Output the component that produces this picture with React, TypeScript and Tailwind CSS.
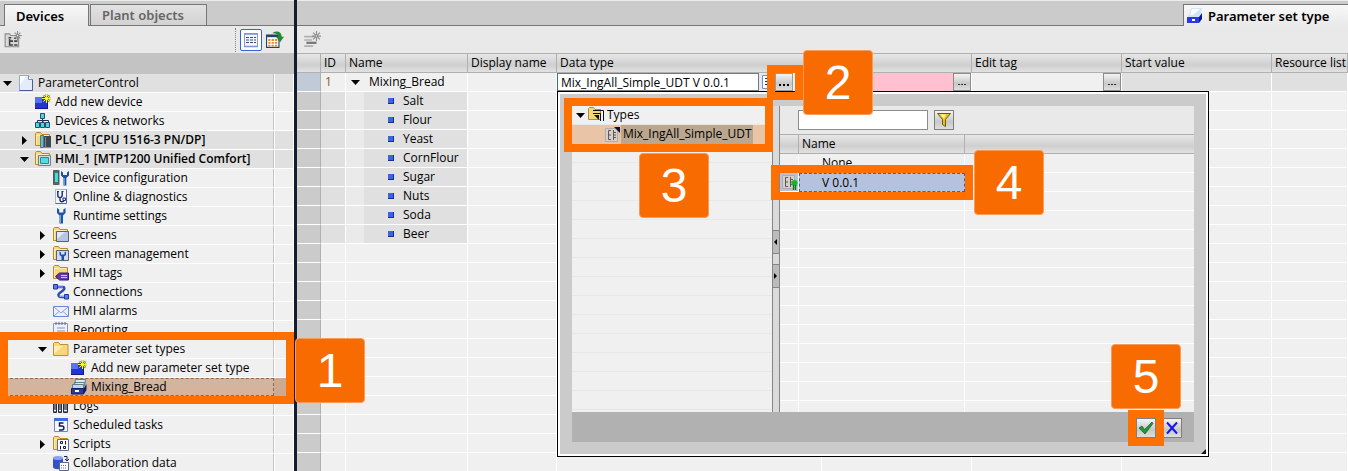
import type { ReactNode } from "react";

const FONT = "font-['Open_Sans','Noto_Sans',sans-serif]";

function Svg({ children, size = 16 }: { children: ReactNode; size?: number }) {
  return (
    <svg
      width={size}
      height={size}
      viewBox="0 0 16 16"
      fill="none"
      className="shrink-0"
      aria-hidden="true"
    >
      {children}
    </svg>
  );
}

const Star = () => (
  <>
    <path
      d="M11.5 0v9M7 4.5h9M8.3 1.3l6.4 6.4M14.7 1.3 8.3 7.7"
      stroke="#55552a"
      strokeWidth="1.6"
    />
    <path
      d="M11.5 0v9M7 4.5h9M8.3 1.3l6.4 6.4M14.7 1.3 8.3 7.7"
      stroke="#f6f23c"
      strokeWidth="1"
    />
  </>
);

const Folder = () => (
  <>
    <path d="M.5 13.5V1.5l1-1h4l1.500 2h7.500v11z" fill="#f8d67c" stroke="#b98a2a" />
    <path d="M1.500 3.500h12M1.500 3v10" stroke="#fdedb8" />
  </>
);

const icons = {
  project: (
    <Svg>
      <path d="M1.500.5h9l4 4v11h-13z" fill="#e4ecfb" stroke="#98a6d0" />
      <path d="M2 1h6L2 10z" fill="#fff" />
      <path d="M10.500.5v4h4" fill="#fff" stroke="#7d8cc0" />
      <path d="M14.500 4.500v11h-13" stroke="#4c5c9c" />
    </Svg>
  ),
  addNew: (
    <Svg>
      <path d="M0 3h13v12H0z" fill="#2334cf" />
      <path d="M0 3h7v6H0z" fill="#5672f2" />
      <path d="M0 14.500h13M12.500 8v7" stroke="#10188c" />
      <Star />
    </Svg>
  ),
  networks: (
    <Svg>
      <path d="M7.500 5v4M2.500 10V7.500h11V10M8 7v3" stroke="#222c50" />
      <path
        d="M5.500.5h4v5h-4zM.5 9.500h4v5h-4zM5.500 9.500h4v5h-4zM10.500 9.500h4v5h-4z"
        fill="#4cd4e0"
        stroke="#2b4a70"
      />
    </Svg>
  ),
  plc: (
    <Svg>
      <Folder />
      <path d="M5.500 3.500h3v12h-3z" fill="#4cc9cf" stroke="#667078" />
      <path d="M9 4h7v11.500H9z" fill="#3f4852" />
      <path d="M10.500 5v10" stroke="#7c868e" />
    </Svg>
  ),
  hmi: (
    <Svg>
      <Folder />
      <path d="M3.500 4.500h12v10h-12z" fill="#d5dce2" stroke="#74828e" />
      <path d="M5.500 6.500h8v6h-8z" fill="#4fdde2" stroke="#3f7e96" />
    </Svg>
  ),
  device: (
    <Svg>
      <path d="M.5.5h5v14h-5z" fill="#5a686e" stroke="#4e5a60" />
      <path d="M2 3h3v9H2z" fill="#3be0dc" />
      <path d="M6.500 0v15" stroke="#a4aeb2" />
      <path
        d="M8 1v4.500L10.500 8v7.500h2.800V8L16 5.500V1l-2 1.500V5h-4V2.500z"
        fill="#1c4f9e"
      />
      <path d="M11.500 8v7" stroke="#5f97d8" />
    </Svg>
  ),
  diagnostics: (
    <Svg>
      <path d="M2.500.5h11v14h-11z" fill="#f4f6fc" stroke="#a9b6da" />
      <path d="M13.500.5v14h-11" stroke="#5868a8" />
      <path
        d="M4.800 3v3c0 3.500 4.400 3.500 4.400 0V3M7 8.500V11c0 2.500 4 2 4 0"
        stroke="#1d2a78"
        strokeWidth="1.400"
      />
      <path d="M10 9h2.500v2.500H10zM4 2.500h2M8.500 2.500h2" stroke="#1d2a78" />
    </Svg>
  ),
  runtime: (
    <Svg>
      <path
        d="M4 0v5l2.500 2.500v8h3.500v-8L12.500 5V0l-2.200 1.500v3H6.200v-3z"
        fill="#1c55a4"
      />
      <path d="M7.500 7v8" stroke="#6ea6e0" />
    </Svg>
  ),
  screens: (
    <Svg>
      <Folder />
      <path d="M3.500 4.500h12v10h-12z" fill="#b8c4e0" stroke="#566180" />
      <path d="M4 5h8l-8 7z" fill="#e2e8f6" />
    </Svg>
  ),
  screenMgmt: (
    <Svg>
      <Folder />
      <path d="M3.500 4.500h12v10h-12z" fill="#cfdcf0" stroke="#566180" />
      <path
        d="M6.500 5.500V9l2 1.500v3.500h2.500v-3.500L13 9V5.500l-1.500 1v2H8v-2z"
        fill="#1f4fa8"
      />
    </Svg>
  ),
  tags: (
    <Svg>
      <Folder />
      <path
        d="M2.500 11.500 6.500 8h9v7h-9z"
        fill="#6436b0"
        stroke="#35187a"
      />
      <path d="M8 10.500h6M8 12.500h6" stroke="#d8c8f4" />
    </Svg>
  ),
  connections: (
    <Svg>
      <path
        d="M3 3h7c2 0 1.500 2 .5 3L6 9.500c-1.500 2 0 3.500 1.500 3.500H13"
        stroke="#2c48b4"
        strokeWidth="2.400"
      />
      <path d="M4 3h6M6.500 12.500H11" stroke="#8fa8f4" />
      <path
        d="M.5.5h4v4.500h-4zM11.500 10.500h4v4.500h-4z"
        fill="#5a7cec"
        stroke="#2038a0"
      />
    </Svg>
  ),
  alarms: (
    <Svg>
      <path d="M.5 3.500h15v10H.5z" fill="#eaf0ff" stroke="#6f86dc" />
      <path d="m1 4 7 6 7-6M1 13l5-4.500M15 13l-5-4.500" stroke="#8ea2e6" />
    </Svg>
  ),
  reporting: (
    <Svg>
      <path d="M.5 1.500h14v14H.5z" fill="#eef0fa" stroke="#8c96c4" />
      <path d="M3 0v3M6 0v3M9 0v3M12 0v3" stroke="#5c6aa0" />
      <path d="M4 6h8M4 9h8M4 12h6" stroke="#8c96b4" />
    </Svg>
  ),
  folder: (
    <Svg>
      <path
        d="M.5 14.500V2.500l1-1h4l1.500 2h8v11z"
        fill="#f8d67c"
        stroke="#c0902e"
      />
      <path d="M1 5h9l-9 8z" fill="#fdecb4" />
    </Svg>
  ),
  drawer: (
    <Svg>
      <path
        d="M4.500.5h10l-1 6h-10zM3.500 3.500h10l-1 5h-10z"
        fill="#dce8ee"
        stroke="#5c8090"
      />
      <path d="M1.500 5.500h11v4h-11z" fill="#c4d8e2" stroke="#5c8090" />
      <path d="M.5 9.500h12v5.500H.5z" fill="#2c3a9c" stroke="#141c66" />
      <path d="m13 9 2.500-4v6L13 15z" fill="#141c66" />
      <path d="M4 11h4v2H4z" fill="#fff" />
    </Svg>
  ),
  logs: (
    <Svg>
      <path
        d="M.5 2.500h3v12h-3zM5.500 2.500h3v12h-3zM10.500 2.500h4v12h-4z"
        fill="#6c7688"
        stroke="#262e3e"
      />
      <path d="M1 12.500h2M6 12.500h2M11 12.500h3" stroke="#fff" />
    </Svg>
  ),
  tasks: (
    <Svg>
      <path d="M1.500 1.500h13v13h-13z" fill="#f6f8ff" stroke="#7386c4" />
      <path d="M1 1h14v3H1z" fill="#3f6ae0" />
      <path
        d="M10.500 6H6.500v3H9c2.500 0 2.500 4 0 4H6"
        stroke="#141c50"
        strokeWidth="1.500"
      />
    </Svg>
  ),
  scripts: (
    <Svg>
      <Folder />
      <path d="M4.500 3.500h11v11h-11z" fill="#fff" stroke="#5e6e94" />
      <path
        d="M7.500 5.500h2v2h-2zM12.500 5v3.500M7.500 10v3.500M10.500 10.500h2v2h-2z"
        stroke="#101840"
      />
    </Svg>
  ),
  collab: (
    <Svg>
      <path d="M0 3v9c0 3 10 3 10 0V3z" fill="#3450cc" />
      <ellipse cx="5" cy="3" rx="5" ry="2" fill="#86a0f4" />
      <path d="M11 1.500h3V5m-2-1 2 2 2-2" stroke="#16204c" />
      <path d="M6.500 7.500h9v8h-9z" fill="#fff" stroke="#5a688c" />
      <path d="M8 10.500h6M8 13h6" stroke="#5a688c" strokeDasharray="1 1" />
    </Svg>
  ),
};

type TreeItem = {
  label: string;
  icon: keyof typeof icons;
  level: 0 | 1 | 2 | 3;
  state?: "open" | "closed";
  bold?: boolean;
  selected?: boolean;
};

const tree: TreeItem[] = [
  { label: "ParameterControl", icon: "project", level: 0, state: "open" },
  { label: "Add new device", icon: "addNew", level: 1 },
  { label: "Devices & networks", icon: "networks", level: 1 },
  { label: "PLC_1 [CPU 1516-3 PN/DP]", icon: "plc", level: 1, state: "closed", bold: true },
  { label: "HMI_1 [MTP1200 Unified Comfort]", icon: "hmi", level: 1, state: "open", bold: true },
  { label: "Device configuration", icon: "device", level: 2 },
  { label: "Online & diagnostics", icon: "diagnostics", level: 2 },
  { label: "Runtime settings", icon: "runtime", level: 2 },
  { label: "Screens", icon: "screens", level: 2, state: "closed" },
  { label: "Screen management", icon: "screenMgmt", level: 2, state: "closed" },
  { label: "HMI tags", icon: "tags", level: 2, state: "closed" },
  { label: "Connections", icon: "connections", level: 2 },
  { label: "HMI alarms", icon: "alarms", level: 2 },
  { label: "Reporting", icon: "reporting", level: 2 },
  { label: "Parameter set types", icon: "folder", level: 2, state: "open" },
  { label: "Add new parameter set type", icon: "addNew", level: 3 },
  { label: "Mixing_Bread", icon: "drawer", level: 3, selected: true },
  { label: "Logs", icon: "logs", level: 2 },
  { label: "Scheduled tasks", icon: "tasks", level: 2 },
  { label: "Scripts", icon: "scripts", level: 2, state: "closed" },
  { label: "Collaboration data", icon: "collab", level: 2 },
];

const indent = ["pl-[3px]", "pl-5", "pl-[38px]", "pl-14"];

function Arrow({ open }: { open: boolean }) {
  return (
    <svg width="9" height="9" viewBox="0 0 9 9" aria-hidden="true">
      <path d={open ? "M0 2h9L4.500 7z" : "M2 0v9l5-4.500z"} fill="#000" />
    </svg>
  );
}

function Frame({ className }: { className: string }) {
  return (
    <div
      className={`pointer-events-none absolute z-20 border-8 border-[#ff7000] ${className}`}
    />
  );
}

function Badge({ n, className }: { n: number; className: string }) {
  return (
    <div
      className={`absolute z-30 flex h-[65px] w-[70px] items-center justify-center rounded border border-[#f99a55] bg-[#f76b00] font-['Liberation_Sans',sans-serif] text-5xl text-white ${className}`}
    >
      {n}
    </div>
  );
}

function TreeRow({ item }: { item: TreeItem }) {
  const bg = item.selected
    ? "bg-[#d4b49c]"
    : item.level === 0 || item.bold
      ? "bg-[#e0e0e0]"
      : "bg-[#f0f0f0]";
  return (
    <li className={`flex h-[19px] border-b border-white ${bg}`}>
      <div
        className={`flex flex-1 items-center ${indent[item.level]} ${
          item.selected
            ? "border border-l-0 border-dashed border-[#8a6a52]"
            : "border-r border-[#c4c4c4]"
        }`}
      >
        <span className="flex w-[15px] shrink-0">
          {item.state && <Arrow open={item.state === "open"} />}
        </span>
        {icons[item.icon]}
        <span
          className={`ml-1 whitespace-nowrap leading-4 ${item.bold ? "font-semibold" : ""}`}
        >
          {item.label}
        </span>
      </div>
      <div
        className={`w-5 border-r border-white ${item.selected ? "bg-[#cda98f]" : "border-l"}`}
      />
    </li>
  );
}

function ProjectTree() {
  return (
    <aside className="relative z-10 flex w-[294px] shrink-0 flex-col bg-[#f0f0f0]">
      <div className="flex h-[26px] items-end gap-px border-t border-[#ececec] border-b border-b-[#777] bg-[#cbcbcb] pl-1 font-['Noto_Sans',sans-serif] text-[13px] font-semibold">
        <button className="-mb-px h-[22px] w-[85px] border border-b-0 border-[#777] bg-linear-to-b from-[#f8f8f8] to-[#e9e9e9] pl-[11px] text-left leading-5">
          Devices
        </button>
        <button className="h-[21px] w-[117px] border border-b-0 border-[#777] bg-linear-to-b from-[#e2e2e2] to-[#d2d2d2] pl-[11px] text-left leading-5 text-[#666]">
          Plant objects
        </button>
      </div>
      <div className="flex h-[27px] items-center bg-[#e9e9e9] pr-2.5 pl-1">
        <button aria-label="New folder">
          <Svg size={18}>
            <path d="M1 14V2.500h4l1 1.500h7v10z" fill="#d8d8d8" stroke="#8c8c8c" />
            <path
              d="M4 6h2.500M5 7v5.500h3M5 9h3M9 9h3M9 12.500h3M9 6.500h2"
              stroke="#444"
              strokeWidth="1.400"
            />
            <path d="M12 0v8M8 4h8M9.500 1.500l5 5M14.500 1.500l-5 5" stroke="#8c8c8c" />
            <path d="M11.500 3.500h1v1h-1z" fill="#fff" />
          </Svg>
        </button>
        <span className="mr-1 ml-auto h-6 border-l border-dotted border-[#888]" />
        <button
          aria-label="Details view"
          className="mr-1 flex h-[22px] w-[22px] items-center justify-center rounded-xs border border-[#3464d4] bg-white"
        >
          <Svg>
            <path d="M1.500 1.500h13v13h-13z" fill="#f4f6fd" stroke="#8d9ccc" />
            <path d="M1 2h14M1 14.500h14" stroke="#7f92d0" strokeWidth="1.500" />
            <path
              d="M3 5.500h10M3 8h10M3 10.500h10"
              stroke="#404a70"
              strokeDasharray="3 1"
            />
          </Svg>
        </button>
        <button aria-label="Show overview">
          <Svg size={18}>
            <path d="M.5 3.500h11v11H.5z" fill="#fff" stroke="#24406c" />
            <path d="M1 4.500h10" stroke="#24406c" strokeWidth="2" />
            <path
              d="M2 8h8M2 10.500h8M2 13h8"
              stroke="#e88a2c"
              strokeWidth="1.600"
              strokeDasharray="2 1"
            />
            <path d="M6 1.500c4-2 7.500-1 8 3.500h2l-3.500 5L9 5h2c0-2-2-3-5-3z" fill="#208a2c" />
          </Svg>
        </button>
      </div>
      <div className="h-[21px] shrink-0 bg-[#c3c3c3]" />
      <ul className="min-h-0 flex-1">
        {tree.map((item) => (
          <TreeRow key={item.label} item={item} />
        ))}
      </ul>
      <Frame className="top-[332px] left-0 h-[72px] w-full" />
      <Badge n={1} className="top-[338px] left-[295px]" />
    </aside>
  );
}

const headerFill =
  "bg-linear-to-b from-[#e9e9e9] via-[#cfcfcf] via-60% to-[#e4e4e4]";
const buttonFill =
  "bg-linear-to-b from-[#f4f4f4] via-[#c8c8c8] via-60% to-[#dedede]";

function MoreButton({ label, active = false }: { label: string; active?: boolean }) {
  return (
    <button
      aria-label={label}
      className={`flex h-[18px] w-[18px] items-center justify-center border ${
        active ? "border-[#9a9a9a]" : "border-[#8c8c8c]"
      } ${buttonFill}`}
    >
      <svg width="12" height="12" viewBox="0 0 12 12" aria-hidden="true">
        {active ? (
          <path d="M1 8h2v2H1zM5 8h2v2H5zM9 8h2v2H9z" fill="#000" />
        ) : (
          <path d="M2 8h2v1H2zM5 8h2v1H5zM8 8h2v1H8z" fill="#333" />
        )}
      </svg>
    </button>
  );
}

function TypeIcon({ released = false }: { released?: boolean }) {
  return (
    <Svg>
      <path d="M.5 1.500h12v13H.5z" fill="#d6cfcb" stroke="#b4aba6" />
      <path
        d="M6 3.500H3.500v9H6M3 8h3M8 5.500h3M8 8h3M8 10.500h3M8.500 3v10"
        stroke="#5c5654"
      />
      {released ? (
        <>
          <circle cx="12.500" cy="9" r="3" fill="#16b81e" />
          <path d="M11.500 11v5M13.500 11v5" stroke="#0c7a14" strokeWidth="1.300" />
        </>
      ) : (
        <path d="M9 0h6v6z" fill="#0c1030" />
      )}
    </Svg>
  );
}

function TypePicker() {
  return (
    <div
      role="dialog"
      aria-label="Select data type"
      className="absolute top-[18px] left-0 z-10 h-[366px] w-[652px] border border-black bg-white p-0.5"
    >
      <div className="flex h-full flex-col bg-[#cbcbcb] p-3">
        <div className="flex min-h-0 flex-1 overflow-hidden">
          <ul className="w-[200px] bg-[#f0f0f0]">
            <li className="flex h-[19px] items-center border-b border-[#e8e8e8] pl-1">
              <Arrow open />
              <span className="ml-[3px] flex">
                <Svg>
                  <path
                    d="M.5 12.500v-11l1-1h4l1.500 2h5.500v10z"
                    fill="#f8d67c"
                    stroke="#b98a2a"
                  />
                  <path d="M5 3.500h10.500V14M5 6.500h7.500V14" stroke="#111" />
                  <path d="M6 8h5v5z" fill="#111" />
                </Svg>
              </span>
              <span className="ml-[3px] leading-4">Types</span>
            </li>
            <li className="flex h-[19px] items-center bg-[#e9c4a7] pl-[33px]">
              <TypeIcon />
              <span className="h-full bg-[#bba78f] pr-px pl-0.5 leading-[18px] whitespace-nowrap">
                Mix_IngAll_Simple_UDT
              </span>
            </li>
            {Array.from({ length: 15 }, (_, i) => (
              <li key={i} className="h-[19px] border-b border-[#e8e8e8]" />
            ))}
          </ul>
          <div className="flex w-2 flex-col border-x border-[#868686] bg-[#dadada] pt-[124px]">
            <span className="flex h-6 items-center border-y border-[#868686] bg-[#bbb]">
              <svg width="6" height="8" viewBox="0 0 6 8" aria-hidden="true">
                <path d="M4 1v6L1 4z" fill="#000" />
              </svg>
            </span>
            <span className="mt-2.5 flex h-6 items-center border-y border-[#868686] bg-[#bbb]">
              <svg width="6" height="8" viewBox="0 0 6 8" aria-hidden="true">
                <path d="M1 1v6l3-3z" fill="#000" />
              </svg>
            </span>
          </div>
          <div className="flex-1 bg-[#f0f0f0]">
            <div className="flex h-7 items-center gap-1.5 bg-[#e9e9e9] pl-[18px]">
              <input
                aria-label="Filter"
                className="h-5 w-[130px] border border-[#8c8c8c] bg-white px-1"
              />
              <button
                aria-label="Apply filter"
                className={`flex h-5 w-5 items-center justify-center border border-[#7e7e7e] ${buttonFill}`}
              >
                <Svg>
                  <path
                    d="M1.500 1.500h13l-5 6v7l-3-2v-5z"
                    fill="#e8c420"
                    stroke="#6e5a10"
                  />
                  <path d="M4 2.500h6l-2 4z" fill="#fff6a8" />
                </Svg>
              </button>
            </div>
            <table className="w-full table-fixed border-separate border-spacing-0">
              <colgroup>
                <col className="w-[19px]" />
                <col className="w-[166px]" />
                <col />
              </colgroup>
              <thead>
                <tr className={`h-5 text-left ${headerFill}`}>
                  <th className="border-t border-r border-b border-[#b0b0b0] p-0" />
                  <th className="border-t border-r border-b border-[#b0b0b0] p-0 pl-[3px] leading-4 font-normal">
                    Name
                  </th>
                  <th className="border-y border-[#b0b0b0] p-0" />
                </tr>
              </thead>
              <tbody>
                {["None", "V 0.0.1", ...Array<string>(12).fill("")].map((name, i) => {
                  const selected = name === "V 0.0.1";
                  return (
                    <tr key={i} className="h-[19px]">
                      <td
                        className={`border-r border-b border-white p-0 ${selected ? "bg-[#b4c2de]" : ""}`}
                      >
                        {selected && (
                          <span className="flex pl-0.5">
                            <TypeIcon released />
                          </span>
                        )}
                      </td>
                      <td
                        className={`p-0 leading-4 ${
                          selected
                            ? "border border-dashed border-[#3a5cc8] bg-[#b4c2de] pl-[22px]"
                            : "border-r border-b border-white pl-[23px]"
                        }`}
                      >
                        {name}
                      </td>
                      <td className="border-b border-white p-0" />
                    </tr>
                  );
                })}
              </tbody>
            </table>
          </div>
        </div>
        <div className="flex h-[30px] shrink-0 items-center justify-end gap-1.5 bg-[#b1b1b1] pt-px pr-3">
          <button
            aria-label="OK"
            className={`flex h-5 w-5 items-center justify-center border border-[#7e7e7e] ${buttonFill}`}
          >
            <Svg>
              <path
                d="m1 8 3-2 2.500 3.500L14 2l1 1.500L7 14z"
                fill="#1c9a34"
                stroke="#0c4a1c"
                strokeWidth=".6"
              />
            </Svg>
          </button>
          <button
            aria-label="Cancel"
            className={`flex h-5 w-5 items-center justify-center border border-[#7e7e7e] ${buttonFill}`}
          >
            <Svg>
              <path d="m3 2.500 10 11M13 2.500l-10 11" stroke="#1414f0" strokeWidth="2" />
            </Svg>
          </button>
        </div>
      </div>
      <svg
        width="5"
        height="5"
        viewBox="0 0 5 5"
        className="absolute right-0.5 bottom-0.5"
        aria-hidden="true"
      >
        <path d="M5 0v5H0z" fill="#111" />
      </svg>
      <Frame className="top-[6px] left-[6px] h-[54px] w-[209px]" />
      <Badge n={3} className="top-[61px] left-[81px]" />
      <Frame className="top-[73px] left-[213px] h-[35px] w-[202px]" />
      <Badge n={4} className="top-[58px] left-[416px]" />
      <Frame className="top-[318px] left-[570px] h-9 w-9" />
      <Badge n={5} className="top-[252px] left-[553px]" />
    </div>
  );
}

const columns = [
  "",
  "ID",
  "Name",
  "Display name",
  "Data type",
  "",
  "Edit tag",
  "Start value",
  "Resource list",
];

const ingredients = ["Salt", "Flour", "Yeast", "CornFlour", "Sugar", "Nuts", "Soda", "Beer"];

const cell = "border-r border-b border-white p-0";

function ParameterTable() {
  return (
    <table className="w-full table-fixed border-separate border-spacing-0">
      <colgroup>
        <col className="w-6" />
        <col className="w-[25px]" />
        <col className="w-[122px]" />
        <col className="w-[89px]" />
        <col className="w-[265px]" />
        <col className="w-[150px]" />
        <col className="w-[150px]" />
        <col className="w-[150px]" />
        <col />
      </colgroup>
      <thead>
        <tr className={`h-5 text-left ${headerFill}`}>
          {columns.map((name, i) => (
            <th
              key={i}
              className="border-y border-r border-[#b0b0b0] p-0 pl-[3px] leading-4 font-normal whitespace-nowrap"
            >
              {name}
            </th>
          ))}
        </tr>
      </thead>
      <tbody>
        <tr className="h-[19px]">
          <td className="border-r border-b border-r-[#b0b0b0] border-b-white bg-[#c1cbd7] p-0" />
          <td className={`${cell} pl-1 leading-4 text-[#8a5a20]`}>1</td>
          <td className={cell}>
            <div className="flex items-center pl-[5px] leading-4">
              <Arrow open />
              <span className="ml-[9px]">Mixing_Bread</span>
            </div>
          </td>
          <td className={cell} />
          <td className={`relative ${cell}`}>
            <div className="flex h-[18px]">
              <input
                aria-label="Data type"
                defaultValue="Mix_IngAll_Simple_UDT V 0.0.1"
                className="h-[18px] w-[202px] border border-[#777] border-l-[#3464d4] bg-white pl-[3px]"
              />
              <span className="flex w-4 items-center bg-[#e4e8f4]">
                <Svg>
                  <path d="M3.500 1.500h12v13h-12z" fill="#fff" stroke="#7a8cbc" />
                  <path
                    d="M6 4.500h9M6 7.500h9M6 10.500h9"
                    stroke="#222c60"
                    strokeDasharray="2 1"
                  />
                </Svg>
              </span>
              <MoreButton label="Browse data types" active />
            </div>
            <TypePicker />
            <Frame className="-top-2 left-[210px] h-[35px] w-9" />
            <Badge n={2} className="-top-[23px] left-[246px]" />
          </td>
          <td className={`${cell} bg-[#ffc0cf]`}>
            <div className="flex justify-end">
              <MoreButton label="Browse" />
            </div>
          </td>
          <td className={cell}>
            <div className="flex justify-end">
              <MoreButton label="Browse edit tag" />
            </div>
          </td>
          <td className={`${cell} bg-[#e0e0e0]`} />
          <td className={`${cell} bg-[#e0e0e0]`} />
        </tr>
        {[...ingredients, ...Array<string>(12).fill("")].map((name, i) => (
          <tr key={i} className="h-[19px]">
            <td className="border-r border-b border-r-[#b0b0b0] border-b-white bg-[#cbcbcb] p-0" />
            <td className={`${cell} ${name ? "bg-[#e0e0e0]" : ""}`} />
            <td className={`${cell} ${name ? "bg-[#eaeaea]" : ""}`}>
              {name && (
                <div className="ml-[18px] flex h-[18px] items-center bg-[#e0e0e0] pl-6 leading-4">
                  <span className="mr-[9px] size-1.5 border-r border-b border-[#1a2c8c] bg-[#3a64e0]" />
                  {name}
                </div>
              )}
            </td>
            <td className={cell} />
            <td className={cell} />
            <td className={cell} />
            <td className={cell} />
            <td className={cell} />
            <td className={cell} />
          </tr>
        ))}
      </tbody>
    </table>
  );
}

export default function App() {
  return (
    <div className={`flex h-screen overflow-hidden bg-[#f0f0f0] text-xs text-black ${FONT}`}>
      <ProjectTree />
      <main className="min-w-0 flex-1 border-l-[3px] border-[#161c30]">
        <div className="flex h-[26px] items-end justify-end border-t border-b border-t-[#ececec] border-b-[#777] bg-[#cbcbcb]">
          <h1 className="-mb-px flex h-[22px] w-[165px] items-center border-t border-l border-[#777] bg-linear-to-b from-[#f8f8f8] to-[#e9e9e9] pl-[3px] font-['Noto_Sans',sans-serif] text-[13px] leading-5 font-semibold">
            <Svg>
              <path d="M4 0h11l-2 9H1z" fill="#cfe6fa" />
              <path d="M5 1h8L6 7H3z" fill="#fff" />
              <path d="M0 9h12v6H0z" fill="#2a3ce0" />
              <path d="m12 9 3-4v6l-3 4z" fill="#10189c" />
              <path d="M5 11h3v2H5z" fill="#fff" />
            </Svg>
            <span className="ml-[5px]">Parameter set type</span>
          </h1>
        </div>
        <div className="flex h-[27px] items-center bg-[#e9e9e9] pl-1.5">
          <button aria-label="Add row">
            <Svg size={18}>
              <path d="M1 5h9M1 8h7M1 13.500h8" stroke="#b0b0b0" strokeWidth="1.500" />
              <path d="M3 10.500h9" stroke="#777" strokeWidth="2" />
              <path d="M12 0v9M8 4.500h8M9 1.500l6 6M15 1.500l-6 6" stroke="#8c8c8c" />
              <path d="M11.500 4h1v1h-1z" fill="#fff" />
            </Svg>
          </button>
        </div>
        <ParameterTable />
      </main>
    </div>
  );
}
